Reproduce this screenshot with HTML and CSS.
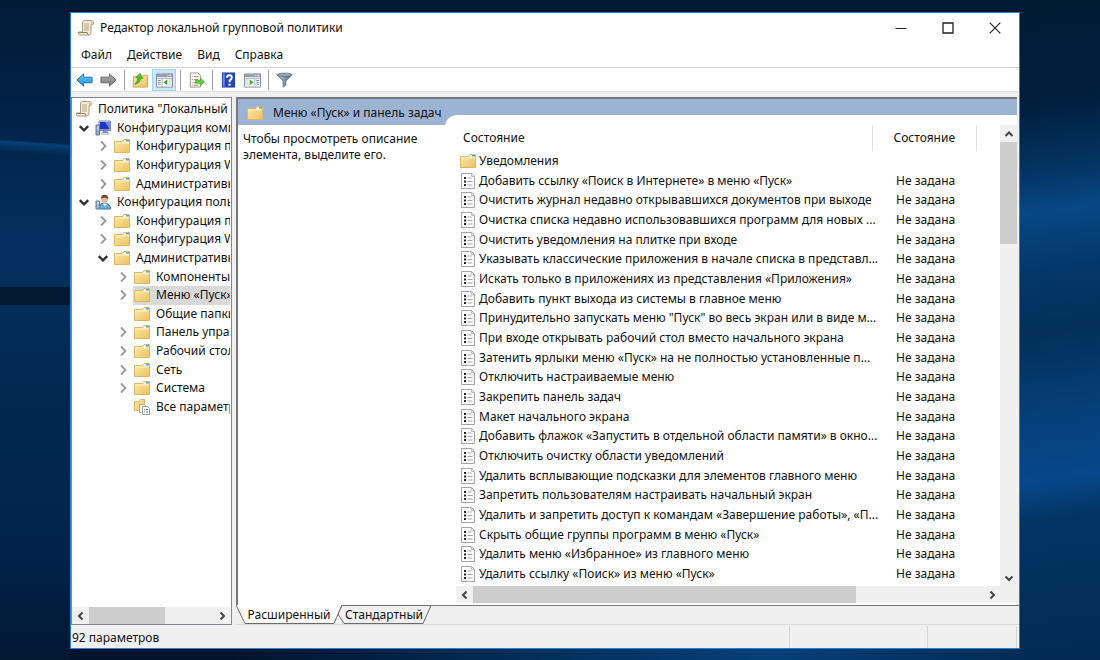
FILE: index.html
```html
<!DOCTYPE html>
<html lang="ru">
<head>
<meta charset="utf-8">
<meta name="viewport" content="width=device-width, initial-scale=1">
<title>Редактор локальной групповой политики</title>
<link rel="stylesheet" href="styles.css">
</head>
<body>
<svg class="sprite" aria-hidden="true">
  <defs>
    <linearGradient id="gold" x1="0" y1="0" x2="1" y2="1"><stop offset="0" stop-color="#fdeaa8"/><stop offset="1" stop-color="#ecc162"/></linearGradient>
    <linearGradient id="steel" x1="0" y1="0" x2="1" y2="0"><stop offset="0" stop-color="#b9c9d6"/><stop offset="1" stop-color="#4c6478"/></linearGradient>
    <linearGradient id="sky" x1="0" y1="0" x2="0" y2="1"><stop offset="0" stop-color="#6fc8f3"/><stop offset="1" stop-color="#1b8fd8"/></linearGradient>
    <linearGradient id="ash" x1="0" y1="0" x2="0" y2="1"><stop offset="0" stop-color="#b4b4b4"/><stop offset="1" stop-color="#777"/></linearGradient>
  </defs>
  <symbol id="folder" viewBox="0 0 16 16">
    <path d="M.5 14.500V3.500h8l1.500-2h5.500v13z" fill="url(#gold)" stroke="#dab766"/>
    <path d="M10.500 2h4.500v2.500H9z" fill="#fffbe8"/><path d="M12 2h3v1.500h-3z" fill="#4e9fe0"/>
    <path d="M1 5h14" stroke="#fff3c4"/>
  </symbol>
  <symbol id="scroll" viewBox="0 0 16 16">
    <path d="M4.500 2.500Q4.500 .5 6.500 .5H13Q15.500 .5 15.500 3T13 4.500V12.500Q13 15 10.500 15H2Q.5 15 .5 13.500V12H4.500z" fill="#f3ead3" stroke="#a99b7d"/>
    <path d="M13 4.500V2.500Q13 .8 14.200 1 15.500 1.500 15.300 4.300z" fill="#d6c7a3"/>
    <path d="M6 4h5M6 6h5M6 8h5M6 10h5" stroke="#b5a88c"/><path d="M.8 12.500h8.400q0 2 1.500 2.500" fill="none" stroke="#8d8065"/>
  </symbol>
  <symbol id="computer" viewBox="0 0 16 16">
    <path d="M4 1h11.500v9.500H4z" fill="#e0e4ee" stroke="#7784a5"/><path d="M5 2h9.500v7.500H5z" fill="#1c35c7"/>
    <path d="M10 2h4.500v7z" fill="#6b8cf3"/><path d="M8 11h4l1.500 2h-7z" fill="#8892a9"/><path d="M6 13h9v2H6z" fill="#cdd3df"/>
    <path d="M1 5h3.500v10H1z" fill="#8fa9c4" stroke="#5e7894"/><path d="M2 7h2M2 9h2" stroke="#e8f0f8"/>
  </symbol>
  <symbol id="user" viewBox="0 0 16 16">
    <path d="M4.500 15V12Q5 9 9 9t6.300 3.500V15z" fill="#6fa9d8" stroke="#3c75a6"/>
    <circle cx="9.500" cy="5" r="3.500" fill="#e6b68f"/><path d="M6 4.500Q6 .8 9.500 .8T13.300 5Q12 4 10 3.500 8 3.500 6 4.500z" fill="#5b4634"/>
    <path d="M8 9.500l2 3 2-3z" fill="#fff"/><path d="M1 7h3.500v8H1z" fill="#9eb5cb" stroke="#64809c"/><path d="M2 9h2" stroke="#fff"/>
  </symbol>
  <symbol id="allset" viewBox="0 0 16 16">
    <path d="M.5 11.500V2.500h5l1-2h4v11z" fill="url(#gold)" stroke="#d9b35e"/>
    <path d="M5.500 5.500h5l1.500 1.500v6.500H5.500z" fill="#fff" stroke="#aaa"/>
    <path d="M8.500 7.500h5l2 2v6H8.500z" fill="#fff" stroke="#999"/><path d="M10 10.500h1M12 10.500h2M10 13h1M12 13h2" stroke="#777"/>
  </symbol>
  <symbol id="policy" viewBox="0 0 16 16">
    <path d="M1.500 .5h10l3 3v12h-13z" fill="#fff" stroke="#a4a4a4"/><path d="M11.500 .5v3h3" fill="none" stroke="#bbb"/>
    <path d="M4 4h2v2H4zM4 7.500h2v2H4zM4 11h2v2H4z" fill="#222"/><path d="M7.500 5h4M7.500 8.500h5M7.500 12h5" stroke="#a4a4b0"/>
  </symbol>
  <symbol id="left" viewBox="0 0 10 10"><path d="M6.500 1.500L3 5l3.500 3.500" fill="none" stroke="currentColor" stroke-width="2"/></symbol>
  <symbol id="right" viewBox="0 0 10 10"><path d="M3.500 1.500L7 5 3.500 8.500" fill="none" stroke="currentColor" stroke-width="2"/></symbol>
  <symbol id="twist" viewBox="0 0 12 12"><path d="M4 1.500L8.500 6 4 10.500" fill="none" stroke="currentColor" stroke-width="1.800"/></symbol>
  <symbol id="up" viewBox="0 0 10 10"><path d="M1.500 7L5 3.500 8.500 7" fill="none" stroke="currentColor" stroke-width="2"/></symbol>
  <symbol id="down" viewBox="0 0 10 10"><path d="M1.500 3.500L5 7l3.500-3.500" fill="none" stroke="currentColor" stroke-width="2"/></symbol>
</svg>

<main class="window">
  <header class="titlebar">
    <svg class="icon"><use href="#scroll"/></svg>
    <h1 class="title">Редактор локальной групповой политики</h1>
    <div class="controls">
      <button class="control" aria-label="Свернуть"><svg viewBox="0 0 12 12"><path d="M.5 6.500h11" stroke="#222"/></svg></button>
      <button class="control" aria-label="Развернуть"><svg viewBox="0 0 12 12"><path d="M1 1h10v10H1z" fill="none" stroke="#222" stroke-width="1.300"/></svg></button>
      <button class="control" aria-label="Закрыть"><svg viewBox="0 0 12 12"><path d="M.7.7l10.600 10.600M11.300.7L.7 11.300" stroke="#222" stroke-width="1.200"/></svg></button>
    </div>
  </header>
  <nav class="menu">
    <button>Файл</button><button>Действие</button><button>Вид</button><button>Справка</button>
  </nav>
  <div class="toolbar">
    <button class="tool" aria-label="Назад"><svg viewBox="0 0 18 16"><path d="M1 8l7-6.500V5h9v6H8v3.500z" fill="url(#sky)" stroke="#1b6fae"/></svg></button>
    <button class="tool" aria-label="Вперёд"><svg viewBox="0 0 18 16"><path d="M17 8l-7-6.500V5H1v6h9v3.500z" fill="url(#ash)" stroke="#666"/></svg></button>
    <span class="divider"></span>
    <button class="tool" aria-label="Вверх"><svg viewBox="0 0 18 16"><path d="M1.500 15.500V4.500h9l1-1.500h5v12.500z" fill="url(#gold)" stroke="#cfa24c"/><path d="M3 12.500Q8.500 11.500 9 6.500h2.500L8.500 1 4 5.500h2.500Q6.500 9 3 12.500z" fill="#50c22f" stroke="#2f8c1a" stroke-width=".7"/></svg></button>
    <button class="tool active" aria-label="Дерево консоли" aria-pressed="true"><svg viewBox="0 0 18 16"><path d="M.5 1.500h17v14H.5z" fill="#fff" stroke="#818b96"/><path d="M1 2h16v3H1z" fill="#8f9aa8"/><path d="M12 3.500h1M14 3.500h2" stroke="#fff"/><path d="M1 6.500h16M6.500 7v8" stroke="#a6adb5"/><path d="M2 8.500h3M2 10.500h3M2 12.500h3" stroke="#6985a8"/><path d="M13 7h4v8h-4z" fill="#dfe3e8"/><path d="M12 7.500v6L8 10.500z" fill="#38a829"/></svg></button>
    <span class="divider"></span>
    <button class="tool" aria-label="Экспорт списка"><svg viewBox="0 0 18 16"><path d="M2.500 .5h8l3 3v12h-11z" fill="#fffdf2" stroke="#9c9784"/><path d="M4 4.500h1M6 4.500h5M4 7.500h1M6 7.500h5M4 10.500h1M6 10.500h4M4 13.500h1M6 13.500h5" stroke="#8a8a80"/><path d="M8 8.500h5V6l4.500 4-4.500 4v-2.500H8z" fill="#69cf3c" stroke="#3f9f26" stroke-width=".7"/></svg></button>
    <span class="divider"></span>
    <button class="tool" aria-label="Справка"><svg viewBox="0 0 18 16"><path d="M2 0h14v16H2z" fill="#2447ad"/><path d="M3 1h2v14H3z" fill="#6d8be0"/><path d="M7.500 5.500Q7.500 3 10 3t2.500 2.300Q12.500 7 10.200 8.500V10.500" fill="none" stroke="#fff" stroke-width="2"/><path d="M9 12h2.200v2H9z" fill="#fff"/></svg></button>
    <button class="tool" aria-label="Область действий"><svg viewBox="0 0 18 16"><path d="M.5 1.500h17v14H.5z" fill="#fff" stroke="#818b96"/><path d="M1 2h16v3H1z" fill="#8f9aa8"/><path d="M12 3.500h1M14 3.500h2" stroke="#fff"/><path d="M1 6.500h16M11.500 7v8" stroke="#a6adb5"/><path d="M13 8.500h3M13 10.500h3M13 12.500h3" stroke="#6985a8"/><path d="M1 7h4v8H1z" fill="#dfe3e8"/><path d="M6 7.500v6l4-3z" fill="#38a829"/></svg></button>
    <span class="divider"></span>
    <button class="tool" aria-label="Фильтр"><svg viewBox="0 0 18 16"><path d="M1 2.500l6.500 6.500v6.500l3-2V9L17 2.500z" fill="url(#steel)" stroke="#597084" stroke-width=".8"/><ellipse cx="9" cy="2.500" rx="8" ry="1.800" fill="#90a7b8" stroke="#5b7386" stroke-width=".8"/></svg></button>
  </div>

  <div class="workspace">
    <aside class="tree-pane">
      <ul class="tree">
        <li class="level0"><span class="node"><svg class="icon"><use href="#scroll"/></svg>Политика "Локальный компьютер"</span></li>
        <li class="level1"><svg class="twist open"><use href="#down"/></svg><span class="node"><svg class="icon"><use href="#computer"/></svg>Конфигурация компьютера</span></li>
        <li class="level2"><svg class="twist"><use href="#twist"/></svg><span class="node"><svg class="icon"><use href="#folder"/></svg>Конфигурация программ</span></li>
        <li class="level2"><svg class="twist"><use href="#twist"/></svg><span class="node"><svg class="icon"><use href="#folder"/></svg>Конфигурация Windows</span></li>
        <li class="level2"><svg class="twist"><use href="#twist"/></svg><span class="node"><svg class="icon"><use href="#folder"/></svg>Административные шаблоны</span></li>
        <li class="level1"><svg class="twist open"><use href="#down"/></svg><span class="node"><svg class="icon"><use href="#user"/></svg>Конфигурация пользователя</span></li>
        <li class="level2"><svg class="twist"><use href="#twist"/></svg><span class="node"><svg class="icon"><use href="#folder"/></svg>Конфигурация программ</span></li>
        <li class="level2"><svg class="twist"><use href="#twist"/></svg><span class="node"><svg class="icon"><use href="#folder"/></svg>Конфигурация Windows</span></li>
        <li class="level2"><svg class="twist open"><use href="#down"/></svg><span class="node"><svg class="icon"><use href="#folder"/></svg>Административные шаблоны</span></li>
        <li class="level3"><svg class="twist"><use href="#twist"/></svg><span class="node"><svg class="icon"><use href="#folder"/></svg>Компоненты Windows</span></li>
        <li class="level3"><svg class="twist"><use href="#twist"/></svg><span class="node selected"><svg class="icon"><use href="#folder"/></svg>Меню «Пуск» и панель задач</span></li>
        <li class="level3"><svg class="twist"></svg><span class="node"><svg class="icon"><use href="#folder"/></svg>Общие папки</span></li>
        <li class="level3"><svg class="twist"><use href="#twist"/></svg><span class="node"><svg class="icon"><use href="#folder"/></svg>Панель управления</span></li>
        <li class="level3"><svg class="twist"><use href="#twist"/></svg><span class="node"><svg class="icon"><use href="#folder"/></svg>Рабочий стол</span></li>
        <li class="level3"><svg class="twist"><use href="#twist"/></svg><span class="node"><svg class="icon"><use href="#folder"/></svg>Сеть</span></li>
        <li class="level3"><svg class="twist"><use href="#twist"/></svg><span class="node"><svg class="icon"><use href="#folder"/></svg>Система</span></li>
        <li class="level3"><svg class="twist"></svg><span class="node"><svg class="icon"><use href="#allset"/></svg>Все параметры</span></li>
      </ul>
      <div class="scroll-h">
        <button class="arrow" aria-label="Прокрутить дерево влево"><svg><use href="#left"/></svg></button>
        <div class="track"><div class="thumb tree-thumb"></div></div>
        <button class="arrow" aria-label="Прокрутить дерево вправо"><svg><use href="#right"/></svg></button>
      </div>
    </aside>

    <section class="detail">
      <div class="view">
        <h2 class="banner"><svg class="icon"><use href="#folder"/></svg>Меню «Пуск» и панель задач</h2>
        <div class="content">
          <p class="description">Чтобы просмотреть описание элемента, выделите его.</p>
          <div class="list-pane">
            <div class="list-main">
              <table class="list">
                <thead><tr><th class="name" scope="col">Состояние</th><th class="state" scope="col">Состояние</th><th class="rest"></th></tr></thead>
                <tbody>
                  <tr><td><span class="item"><svg class="icon"><use href="#folder"/></svg>Уведомления</span></td><td></td></tr>
                  <tr><td><span class="item"><svg class="icon"><use href="#policy"/></svg>Добавить ссылку «Поиск в Интернете» в меню «Пуск»</span></td><td>Не задана</td></tr>
                  <tr><td><span class="item"><svg class="icon"><use href="#policy"/></svg>Очистить журнал недавно открывавшихся документов при выходе</span></td><td>Не задана</td></tr>
                  <tr><td><span class="item"><svg class="icon"><use href="#policy"/></svg>Очистка списка недавно использовавшихся программ для новых ...</span></td><td>Не задана</td></tr>
                  <tr><td><span class="item"><svg class="icon"><use href="#policy"/></svg>Очистить уведомления на плитке при входе</span></td><td>Не задана</td></tr>
                  <tr><td><span class="item"><svg class="icon"><use href="#policy"/></svg>Указывать классические приложения в начале списка в представл...</span></td><td>Не задана</td></tr>
                  <tr><td><span class="item"><svg class="icon"><use href="#policy"/></svg>Искать только в приложениях из представления «Приложения»</span></td><td>Не задана</td></tr>
                  <tr><td><span class="item"><svg class="icon"><use href="#policy"/></svg>Добавить пункт выхода из системы в главное меню</span></td><td>Не задана</td></tr>
                  <tr><td><span class="item"><svg class="icon"><use href="#policy"/></svg>Принудительно запускать меню "Пуск" во весь экран или в виде м...</span></td><td>Не задана</td></tr>
                  <tr><td><span class="item"><svg class="icon"><use href="#policy"/></svg>При входе открывать рабочий стол вместо начального экрана</span></td><td>Не задана</td></tr>
                  <tr><td><span class="item"><svg class="icon"><use href="#policy"/></svg>Затенить ярлыки меню «Пуск» на не полностью установленные п...</span></td><td>Не задана</td></tr>
                  <tr><td><span class="item"><svg class="icon"><use href="#policy"/></svg>Отключить настраиваемые меню</span></td><td>Не задана</td></tr>
                  <tr><td><span class="item"><svg class="icon"><use href="#policy"/></svg>Закрепить панель задач</span></td><td>Не задана</td></tr>
                  <tr><td><span class="item"><svg class="icon"><use href="#policy"/></svg>Макет начального экрана</span></td><td>Не задана</td></tr>
                  <tr><td><span class="item"><svg class="icon"><use href="#policy"/></svg>Добавить флажок «Запустить в отдельной области памяти» в окно...</span></td><td>Не задана</td></tr>
                  <tr><td><span class="item"><svg class="icon"><use href="#policy"/></svg>Отключить очистку области уведомлений</span></td><td>Не задана</td></tr>
                  <tr><td><span class="item"><svg class="icon"><use href="#policy"/></svg>Удалить всплывающие подсказки для элементов главного меню</span></td><td>Не задана</td></tr>
                  <tr><td><span class="item"><svg class="icon"><use href="#policy"/></svg>Запретить пользователям настраивать начальный экран</span></td><td>Не задана</td></tr>
                  <tr><td><span class="item"><svg class="icon"><use href="#policy"/></svg>Удалить и запретить доступ к командам «Завершение работы», «П...</span></td><td>Не задана</td></tr>
                  <tr><td><span class="item"><svg class="icon"><use href="#policy"/></svg>Скрыть общие группы программ в меню «Пуск»</span></td><td>Не задана</td></tr>
                  <tr><td><span class="item"><svg class="icon"><use href="#policy"/></svg>Удалить меню «Избранное» из главного меню</span></td><td>Не задана</td></tr>
                  <tr><td><span class="item"><svg class="icon"><use href="#policy"/></svg>Удалить ссылку «Поиск» из меню «Пуск»</span></td><td>Не задана</td></tr>
                </tbody>
              </table>
              <div class="scroll-h">
                <button class="arrow" aria-label="Прокрутить список влево"><svg><use href="#left"/></svg></button>
                <div class="track"><div class="thumb list-thumb"></div></div>
                <button class="arrow" aria-label="Прокрутить список вправо"><svg><use href="#right"/></svg></button>
              </div>
            </div>
            <div class="scroll-v">
              <button class="arrow" aria-label="Прокрутить вверх"><svg><use href="#up"/></svg></button>
              <div class="track"><div class="thumb page-thumb"></div></div>
              <button class="arrow" aria-label="Прокрутить вниз"><svg><use href="#down"/></svg></button>
              <div class="corner"></div>
            </div>
          </div>
        </div>
      </div>
      <div class="tabs">
        <button class="tab current"><svg class="shape" viewBox="0 0 106 20" preserveAspectRatio="none"><path d="M0 0l9 18.500h89L106 0" fill="#fff" stroke="#6b6b6b"/></svg>Расширенный</button>
        <button class="tab second"><svg class="shape" viewBox="0 0 94 20" preserveAspectRatio="none"><path d="M5 .5L1 9l6 9.500h79L94 .5z" fill="#f0f0f0" stroke="#6b6b6b"/></svg>Стандартный</button>
        <span class="tab-line"></span>
      </div>
    </section>
  </div>

  <footer class="status"><span class="cell count">92 параметров</span><span class="cell mid"></span><span class="cell end"></span></footer>
</main>
</body>
</html>
```
FILE: styles.css
```css
* { box-sizing: border-box; }
body {
  margin: 0;
  min-height: 100vh;
  padding: 12px 80px 11px 70px;
  display: flex;
  font: 12px/16px "Noto Sans", "Open Sans", sans-serif;
  color: #111;
  background:
    linear-gradient(to right, #011830 0 70px, transparent 70px) 0 287px / 100% 18px no-repeat,
    linear-gradient(184deg, transparent 0 20px, #083f76 22px, transparent 32px) 0 124px / 70px 60px no-repeat,
    linear-gradient(to bottom, #011a36, #02244a 20%, #033060 38%, #02284f 60%, #01234a 84%, #011732) 0 0 / 70px 100% no-repeat,
    linear-gradient(to right, #01122a 20%, #02305c 50%, #033f78 70%, #022a52 95%) 0 100% / 100% 12px no-repeat,
    linear-gradient(172deg, #001a33, #011f3e 16%, #03325f 25%, #064784 32%, #03396b 40%, #023059 50%, #053f78 62%, #06478a 72%, #023564 78%, #022a52) 100% 0 / 80px 100% no-repeat,
    #001a35;
}
button { font: inherit; color: inherit; background: none; border: 0; padding: 0; }
.sprite { position: absolute; width: 0; height: 0; }
.icon { width: 16px; height: 16px; flex: none; }

.window { flex: 1; min-width: 0; display: flex; flex-direction: column; border: 1px solid #1f85dc; background: #f0f0f0; }
.titlebar { display: flex; align-items: center; height: 30px; padding: 0 1px 0 7px; gap: 6px; background: #fff; }
.title { flex: 1; margin: 0; font-size: 12px; font-weight: 400; }
.controls { display: flex; }
.control { width: 47px; height: 30px; display: grid; place-items: center; }
.control svg { width: 12px; height: 12px; }
.menu { display: flex; gap: 15px; height: 25px; padding-left: 10px; align-items: center; background: #fff; border-bottom: 1px solid #cdcdcd; }
.toolbar { display: flex; align-items: center; height: 24px; padding-left: 1px; background: #fff; border-bottom: 1px solid #e6e6e6; }
.tool { width: 24px; height: 22px; display: grid; place-items: center; }
.tool svg { width: 17px; height: 16px; }
.tool.active { background: #cde8fc; border: 1px solid #a5d3f5; }
.divider { width: 1px; height: 20px; margin: 0 3px 0 4px; background: #a0a0a0; }

.workspace { flex: 1; min-height: 0; display: flex; gap: 4px; padding-top: 5px; }
.tree-pane { width: 161px; flex: none; display: flex; flex-direction: column; border: 1px solid #828790; background: #fff; padding-right: 1px; }
.tree { list-style: none; margin: 0 0 auto; padding: 2px 0 0; height: 318px; display: flex; flex-direction: column; overflow: hidden; }
.tree li { flex: 1; display: flex; align-items: center; gap: 2px; white-space: nowrap; min-width: 0; }
.level0, .level1 { padding-left: 4px; }
.level2 { padding-left: 23px; }
.level3 { padding-left: 43px; }
.twist { width: 16px; height: 12px; flex: none; color: #999; }
.twist.open { color: #333; }
.node { flex: 1; min-width: 0; height: 100%; display: flex; align-items: center; gap: 6px; padding-left: 1px; overflow: hidden; }
.level0 .node { padding-left: 0; }
.selected { background: #d9d9d9; }

.scroll-h { display: flex; height: 17px; flex: none; background: #f0f0f0; }
.scroll-v { display: flex; flex-direction: column; width: 17px; flex: none; background: #f0f0f0; }
.corner { height: 17px; flex: none; }
.arrow { width: 17px; height: 17px; flex: none; display: grid; place-items: center; color: #444; }
.arrow svg { width: 10px; height: 10px; }
.track { flex: 1; display: flex; }
.thumb { background: #cdcdcd; }
.tree-thumb { width: 61%; }
.list-thumb { width: 75%; }
.page-thumb { width: 100%; height: 24%; }

.detail { flex: 1; min-width: 0; display: flex; flex-direction: column; }
.view { flex: 1; min-height: 0; display: flex; flex-direction: column; margin-right: 2px; border: solid #787878; border-width: 2px 0 0 2px; background: #fff; }
.banner { display: flex; align-items: center; gap: 10px; margin: 0; height: 26px; padding: 2px 0 0 9px; background: #9cb4d3; font-size: 12px; font-weight: 400; flex: none; }
.content { flex: 1; min-height: 0; display: flex; }
.description { width: 207px; flex: none; margin: 0; padding: 6px 5px; }
.list-pane { position: relative; flex: 1; min-width: 0; display: flex; margin-top: -10px; padding: 10px 0 2px 11px; border-top-left-radius: 12px; background: #fff; }
.list-main { flex: 1; min-width: 0; display: flex; flex-direction: column; }
.list { flex: 1; width: 100%; margin-bottom: 2px; border-collapse: collapse; table-layout: fixed; }
.list th { height: 26px; padding: 0 0 0 21px; font-weight: 400; text-align: left; border-right: 1px solid #e2e2e2; }
.list .name { width: 416px; padding-left: 7px; }
.list .state { width: 104px; }
.list .rest { border: 0; }
.list td { padding: 0 0 0 24px; white-space: nowrap; }
.list td:first-child { padding-left: 4px; }
.item { display: flex; align-items: center; gap: 3px; }

.tabs { display: flex; height: 20px; flex: none; border-bottom: 1px solid #dcdcdc; }
.tab { position: relative; height: 20px; z-index: 1; }
.shape { position: absolute; inset: 0; width: 100%; height: 100%; z-index: -1; }
.current { width: 106px; }
.second { width: 94px; margin-left: -5px; }
.tab-line { flex: 1; border-top: 1px solid #787878; }
.status { display: flex; height: 23px; align-items: center; flex: none; }
.cell { height: 22px; padding: 4px 1px; border-right: 1px solid #d5d5d5; }
.count { flex: 1; }
.mid { width: 138px; }
.end { width: 89px; margin-right: 2px; }
```
